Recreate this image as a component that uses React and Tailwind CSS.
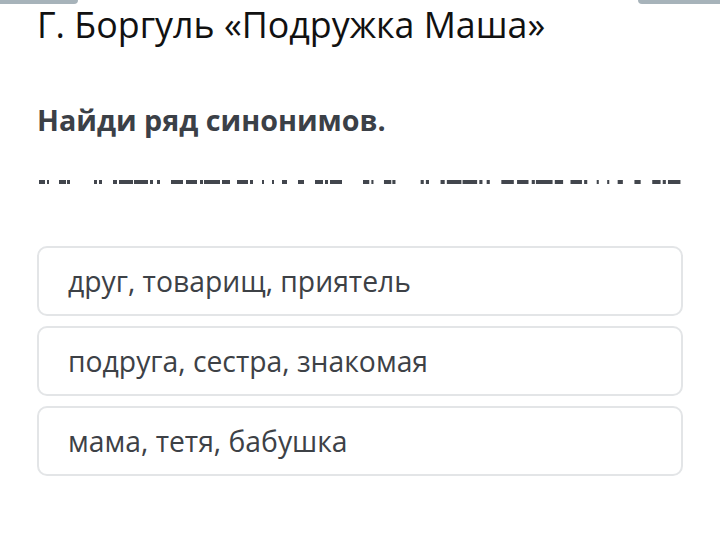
const p1 = [
  [39, 6], [47, 2], [59, 7], [67, 3], [94, 3], [99, 3], [113, 4], [119, 14], [134, 14],
  [150, 3], [157, 3], [171, 12], [186, 11], [200, 3], [204, 16], [222, 8], [237, 11],
  [250, 3], [262, 2], [272, 2], [282, 5], [298, 6], [315, 8], [325, 3], [330, 12],
]

const p2 = p1.map(([x, w]) => [363 + (x - 39) * 1.048, w * 1.04])

function DashLine() {
  return (
    <svg width="720" height="8" className="block">
      {[...p1, ...p2].map(([x, w], i) => (
        <rect key={i} x={x} y="2" width={w} height="4" fill="#42464d" />
      ))}
    </svg>
  )
}

const options = ['друг, товарищ, приятель', 'подруга, сестра, знакомая', 'мама, тетя, бабушка']

export default function App() {
  return (
    <div className="w-[720px] h-[558px] bg-white overflow-hidden relative">
      {/* cut-off bars peeking in at the top */}
      <div className="absolute top-0 left-0 right-0 flex justify-between h-[4px]">
        <div className="w-[78px] bg-[#a7b3ba] rounded-br-[4px]" />
        <div className="w-[82px] bg-[#a7b3ba] rounded-bl-[4px]" />
      </div>

      <h1 className="pl-[37px] text-[35.8px] leading-[48px] text-[#111] font-['Open_Sans',sans-serif]">
        Г. Боргуль «Подружка Маша»
      </h1>

      <p className="pl-[37px] mt-[54px] text-[28.7px] leading-[36px] font-bold text-[#3b4047] font-['Open_Sans',sans-serif]">
        Найди ряд синонимов.
      </p>

      <div className="mt-[40px]">
        <DashLine />
      </div>

      <div className="mt-[60px] mx-[37px] flex flex-col gap-[10px]">
        {options.map((t) => (
          <div
            key={t}
            className="h-[70px] border-2 border-[#e3e5e7] rounded-[10px] flex items-center pl-[29px] text-[28.3px] text-[#3d4146] font-['Open_Sans',sans-serif]"
          >
            {t}
          </div>
        ))}
      </div>
    </div>
  )
}
